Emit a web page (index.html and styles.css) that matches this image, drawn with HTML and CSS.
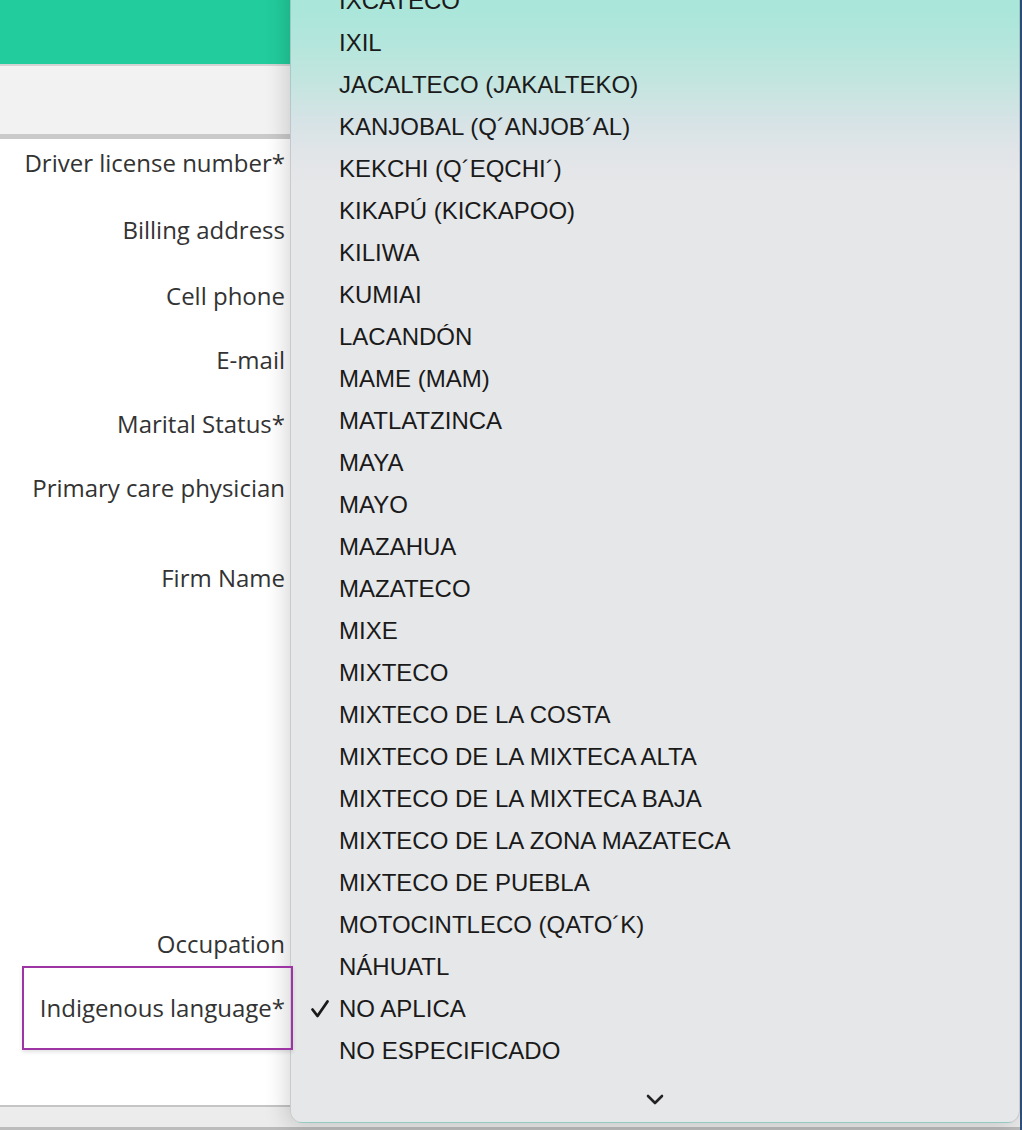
FILE: index.html
```html
<!DOCTYPE html>
<html lang="en">
<head>
  <meta charset="UTF-8">
  <meta name="viewport" content="width=device-width, initial-scale=1.0">
  <title>Patient Demographics</title>
  <link rel="stylesheet" href="styles.css">
</head>
<body>

  <div class="page">
    <!-- Top Bar -->
    <header class="topbar"></header>

    <!-- Tabs / Toolbar -->
    <div class="toolbar"></div>

    <!-- Demographics Form -->
    <form class="form">
      <div class="row">
        <label class="label">Driver license number*</label>
        <div class="field field-a"></div>
      </div>
      <div class="row">
        <label class="label">Billing address</label>
        <div class="field field-b"></div>
      </div>
      <div class="row">
        <label class="label">Cell phone</label>
        <div class="field"></div>
      </div>
      <div class="row">
        <label class="label">E-mail</label>
        <div class="field"></div>
      </div>
      <div class="row">
        <label class="label">Marital Status*</label>
        <div class="field"></div>
      </div>
      <div class="row">
        <label class="label">Primary care physician</label>
        <div class="field field-md"></div>
      </div>
      <div class="row">
        <label class="label">Firm Name</label>
        <div class="field field-block"></div>
      </div>
      <div class="row">
        <label class="label">Occupation</label>
        <div class="field"></div>
      </div>
      <div class="row">
        <div class="label-cell">
          <label class="label highlight">Indigenous language*</label>
        </div>
        <div class="field"></div>
      </div>
    </form>

    <footer class="bottombar"></footer>
  </div>

  <!-- Open select menu -->
  <div class="menu">
    <ul class="menu-list">
      <li><span class="check-cell"></span>IXCATECO</li>
      <li><span class="check-cell"></span>IXIL</li>
      <li><span class="check-cell"></span>JACALTECO (JAKALTEKO)</li>
      <li><span class="check-cell"></span>KANJOBAL (Q´ANJOB´AL)</li>
      <li><span class="check-cell"></span>KEKCHI (Q´EQCHI´)</li>
      <li><span class="check-cell"></span>KIKAPÚ (KICKAPOO)</li>
      <li><span class="check-cell"></span>KILIWA</li>
      <li><span class="check-cell"></span>KUMIAI</li>
      <li><span class="check-cell"></span>LACANDÓN</li>
      <li><span class="check-cell"></span>MAME (MAM)</li>
      <li><span class="check-cell"></span>MATLATZINCA</li>
      <li><span class="check-cell"></span>MAYA</li>
      <li><span class="check-cell"></span>MAYO</li>
      <li><span class="check-cell"></span>MAZAHUA</li>
      <li><span class="check-cell"></span>MAZATECO</li>
      <li><span class="check-cell"></span>MIXE</li>
      <li><span class="check-cell"></span>MIXTECO</li>
      <li><span class="check-cell"></span>MIXTECO DE LA COSTA</li>
      <li><span class="check-cell"></span>MIXTECO DE LA MIXTECA ALTA</li>
      <li><span class="check-cell"></span>MIXTECO DE LA MIXTECA BAJA</li>
      <li><span class="check-cell"></span>MIXTECO DE LA ZONA MAZATECA</li>
      <li><span class="check-cell"></span>MIXTECO DE PUEBLA</li>
      <li><span class="check-cell"></span>MOTOCINTLECO (QATO´K)</li>
      <li><span class="check-cell"></span>NÁHUATL</li>
      <li class="selected">
        <span class="check-cell">
          <svg width="20" height="20" viewBox="0 0 20 20">
            <path d="M2.5 10.5 L7.5 17 L17.5 2.5" fill="none" stroke="#1a1a1a" stroke-width="2.8" stroke-linecap="round" stroke-linejoin="round"/>
          </svg>
        </span>NO APLICA
      </li>
      <li><span class="check-cell"></span>NO ESPECIFICADO</li>
    </ul>
    <div class="menu-more">
      <svg width="20" height="12" viewBox="0 0 20 12">
        <path d="M3 2 L10 9 L17 2" fill="none" stroke="#222" stroke-width="2.6" stroke-linecap="round" stroke-linejoin="round"/>
      </svg>
    </div>
  </div>

</body>
</html>
```

FILE: styles.css
```css
/* General Page Styling */
body {
  margin: 0;
  padding: 0;
  background-color: #30507e;
  font-family: 'Open Sans', 'Liberation Sans', sans-serif;
  color: #333;
  overflow: hidden;
}

.page {
  margin-right: 2px;
  background-color: #fff;
}

/* Top Bar */
.topbar {
  height: 64px;
  background-color: #22cc9c;
}

.toolbar {
  height: 68px;
  background-color: #f2f2f2;
  border-top: 2px solid #d4d4d4;
  border-bottom: 5px solid #cacaca;
}

/* Form rows */
.form {
  padding-bottom: 57px;
}

.row {
  display: grid;
  grid-template-columns: 285px 1fr;
  column-gap: 16px;
  padding: 12px 0;
}

.label {
  font-size: 24px;
  line-height: 23px;
  text-align: right;
  white-space: nowrap;
}

.label-cell {
  display: flex;
  justify-content: flex-end;
  align-items: flex-start;
}

/* drawn above the open menu */
.label.highlight {
  position: relative;
  z-index: 2;
  display: inline-block;
  padding: 28px 6px 29px 16px;
  margin: -30px -8px -31px 0;
  border: 2px solid #9d36a4;
  box-shadow: 0 2px 4px rgba(0, 0, 0, 0.12);
}

.field {
  height: 40px;
  border: 1px solid #ccc;
  border-radius: 4px;
  box-sizing: border-box;
}

.field-a {
  height: 43px;
}

.field-b {
  height: 42px;
}

.field-md {
  height: 66px;
}

.field-block {
  height: 342px;
}

.bottombar {
  height: 20px;
  background-color: #ececec;
  border-top: 2px solid #c4c4c4;
  border-bottom: 3px solid #bcbcbc;
}

/* Select menu popup */
.menu {
  position: absolute;
  top: -30px;
  left: 290px;
  width: 730px;
  padding-top: 9px;
  box-sizing: border-box;
  border-radius: 12px;
  border: 1px solid rgba(0, 0, 0, 0.12);
  background: linear-gradient(to bottom,
    #aae6da 0px,
    #abe6db 40px,
    #b3e6dc 70px,
    #c3e5df 110px,
    #d6e3e6 150px,
    #e2e5e8 185px,
    #e6e7e9 215px);
  box-shadow: -4px 4px 22px rgba(0, 0, 0, 0.16);
  font-family: 'Liberation Sans', Arial, sans-serif;
  color: #1a1a1a;
}

.menu-list {
  list-style-type: none;
  margin: 0;
  padding: 0;
}

.menu-list li {
  display: flex;
  align-items: center;
  height: 42px;
  font-size: 24px;
}

.check-cell {
  display: flex;
  align-items: center;
  width: 48px;
  height: 42px;
  padding-left: 19px;
  box-sizing: border-box;
}

.menu-more {
  display: flex;
  justify-content: center;
  align-items: center;
  height: 50px;
  padding-top: 5px;
  box-sizing: border-box;
}
```
